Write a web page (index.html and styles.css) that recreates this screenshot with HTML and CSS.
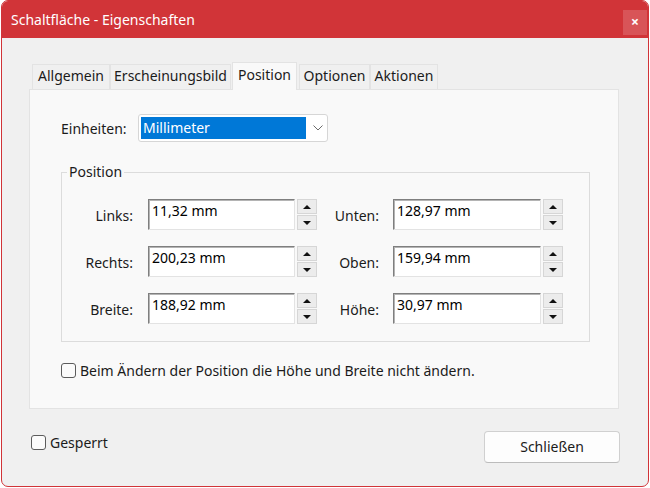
FILE: index.html
```html
<!DOCTYPE html>
<html lang="de">
<head>
<meta charset="utf-8">
<title>Schaltfläche - Eigenschaften</title>
<link rel="stylesheet" href="styles.css">
</head>
<body>
<div class="window">
  <div class="titlebar">
    <span class="title">Schaltfläche - Eigenschaften</span>
    <span class="close">×</span>
  </div>
  <div class="body">
    <div class="tabs">
      <div class="tab t-allg">Allgemein</div>
      <div class="tab t-ersch">Erscheinungsbild</div>
      <div class="tab t-pos active">Position</div>
      <div class="tab t-opt">Optionen</div>
      <div class="tab t-akt">Aktionen</div>
    </div>
    <div class="panel">
      <div class="units-row">
        <span class="units-label">Einheiten:</span>
        <div class="select">
          <span class="sel-text">Millimeter</span>
          <svg class="chevron" width="10" height="6" viewBox="0 0 10 6"><path d="M0.5 0.5 L5 5 L9.5 0.5" fill="none" stroke="#6b6b6b" stroke-width="1"/></svg>
        </div>
      </div>
      <fieldset class="group">
        <legend>Position</legend>
        <div class="grid">
          <span class="lbl">Links:</span>
          <div class="field">11,32 mm</div>
          <div class="spin"><span class="sb up"></span><span class="sb down"></span></div>
          <span class="lbl">Unten:</span>
          <div class="field">128,97 mm</div>
          <div class="spin"><span class="sb up"></span><span class="sb down"></span></div>

          <span class="lbl">Rechts:</span>
          <div class="field">200,23 mm</div>
          <div class="spin"><span class="sb up"></span><span class="sb down"></span></div>
          <span class="lbl">Oben:</span>
          <div class="field">159,94 mm</div>
          <div class="spin"><span class="sb up"></span><span class="sb down"></span></div>

          <span class="lbl">Breite:</span>
          <div class="field">188,92 mm</div>
          <div class="spin"><span class="sb up"></span><span class="sb down"></span></div>
          <span class="lbl">Höhe:</span>
          <div class="field">30,97 mm</div>
          <div class="spin"><span class="sb up"></span><span class="sb down"></span></div>
        </div>
      </fieldset>
      <div class="check keep">
        <span class="box"></span>
        <span>Beim Ändern der Position die Höhe und Breite nicht ändern.</span>
      </div>
    </div>
    <div class="footer">
      <div class="check locked">
        <span class="box"></span>
        <span>Gesperrt</span>
      </div>
      <div class="button">Schließen</div>
    </div>
  </div>
</div>
</body>
</html>
```

FILE: styles.css
```css
html, body {
  margin: 0;
  background: #ffffff;
}
body {
  font-family: "Noto Sans", "Open Sans", sans-serif;
  font-size: 14px;
  color: #1b1b1b;
}
.window {
  margin-left: 1px;
  width: 648px;
  height: 487px;
  box-sizing: border-box;
  border: 1px solid #d13438;
  border-radius: 7px;
  overflow: hidden;
  background: #f0f0f0;
  display: flex;
  flex-direction: column;
}
.titlebar {
  height: 37px;
  flex: none;
  background: #d13438;
  display: flex;
  justify-content: space-between;
  align-items: center;
  padding: 0 1px 0 9px;
  color: #ffffff;
}
.title {
  font-size: 14px;
  line-height: 20px;
  margin-top: 1px;
}
.close {
  align-self: flex-start;
  margin-top: 9px;
  width: 24px;
  height: 25px;
  background: rgba(255, 255, 255, 0.16);
  color: #ffffff;
  font-size: 14px;
  font-weight: bold;
  line-height: 24px;
  text-align: center;
}
.body {
  flex: 1;
  padding: 24px 28px 0 27px;
}
.tabs {
  display: flex;
  align-items: flex-end;
  height: 27px;
  padding-left: 3px;
  position: relative;
  z-index: 1;
}
.tab {
  box-sizing: border-box;
  height: 25px;
  border: 1px solid #e3e3e3;
  border-bottom: none;
  background: #f0f0f0;
  line-height: 22px;
  text-align: center;
  color: #1b1b1b;
}
.tab.active {
  height: 28px;
  margin-bottom: -1px;
  background: #f9f9f9;
  line-height: 24px;
}
.t-allg { width: 78px; }
.t-ersch { width: 121px; }
.t-pos { width: 65px; margin-left: 1px; }
.t-opt { width: 71px; margin-left: 2px; }
.t-akt { width: 68px; }
.panel {
  box-sizing: border-box;
  width: 590px;
  height: 320px;
  border: 1px solid #e3e3e3;
  background: #f9f9f9;
  padding: 24px 0 0 31px;
}
.units-row {
  display: flex;
  align-items: center;
  height: 28px;
}
.units-label {
  width: 77px;
  margin-top: 1px;
}
.select {
  box-sizing: border-box;
  width: 190px;
  height: 28px;
  border: 1px solid #d6d6d6;
  border-radius: 3px;
  background: #ffffff;
  padding: 2px;
  display: flex;
  align-items: center;
}
.sel-text {
  box-sizing: border-box;
  width: 165px;
  height: 22px;
  background: #0078d7;
  color: #ffffff;
  padding-left: 2px;
  line-height: 21px;
}
.chevron {
  margin-left: 7px;
}
.group {
  box-sizing: border-box;
  width: 529px;
  height: 180px;
  margin: 20px 0 0 0;
  padding: 0;
  border: 1px solid #dcdcdc;
  border-top-color: #dcdcdc;
}
.group legend {
  margin-left: 5px;
  padding: 0 2px;
  line-height: 20px;
}
.grid {
  display: grid;
  grid-template-columns: 86px 147px 22px 76px 148px 22px;
  grid-auto-rows: 31px;
  row-gap: 16px;
  padding-top: 17px;
}
.lbl {
  text-align: right;
  padding-right: 15px;
  line-height: 31px;
  padding-top: 1px;
}
.grid .lbl:nth-child(6n+4) {
  padding-right: 14px;
}
.field {
  box-sizing: border-box;
  background: #ffffff;
  border: 1px solid;
  border-color: #7f7f7f #e3e3e3 #e3e3e3 #7f7f7f;
  box-shadow: inset 1px 1px 0 #b4b4b4;
  padding: 1px 0 0 3px;
  line-height: 20px;
  color: #000;
}
.spin {
  display: flex;
  flex-direction: column;
  justify-content: space-between;
  padding-left: 2px;
}
.sb {
  box-sizing: border-box;
  height: 15px;
  width: 20px;
  background: #ececec;
  border: 1px solid #d6d6d6;
  display: flex;
  align-items: center;
  justify-content: center;
}
.sb::after {
  content: "";
  width: 0;
  height: 0;
  border-left: 4px solid transparent;
  border-right: 4px solid transparent;
}
.sb.up::after {
  border-bottom: 4px solid #111;
}
.sb.down::after {
  border-top: 4px solid #111;
}
.check {
  display: flex;
  align-items: center;
  gap: 4px;
}
.box {
  box-sizing: border-box;
  width: 15px;
  height: 15px;
  border: 1px solid #5c5c5c;
  border-radius: 3px;
  background: #fbfbfb;
}
.keep {
  margin-top: 20px;
  height: 16px;
}
.footer {
  display: flex;
  justify-content: space-between;
  align-items: flex-start;
  margin-top: 22px;
}
.locked {
  margin-top: 4px;
  height: 15px;
  margin-left: 2px;
}
.button {
  box-sizing: border-box;
  width: 136px;
  height: 32px;
  background: #fdfdfd;
  border: 1px solid #d0d0d0;
  border-bottom-color: #bcbcbc;
  border-radius: 4px;
  text-align: center;
  line-height: 29px;
}
```
